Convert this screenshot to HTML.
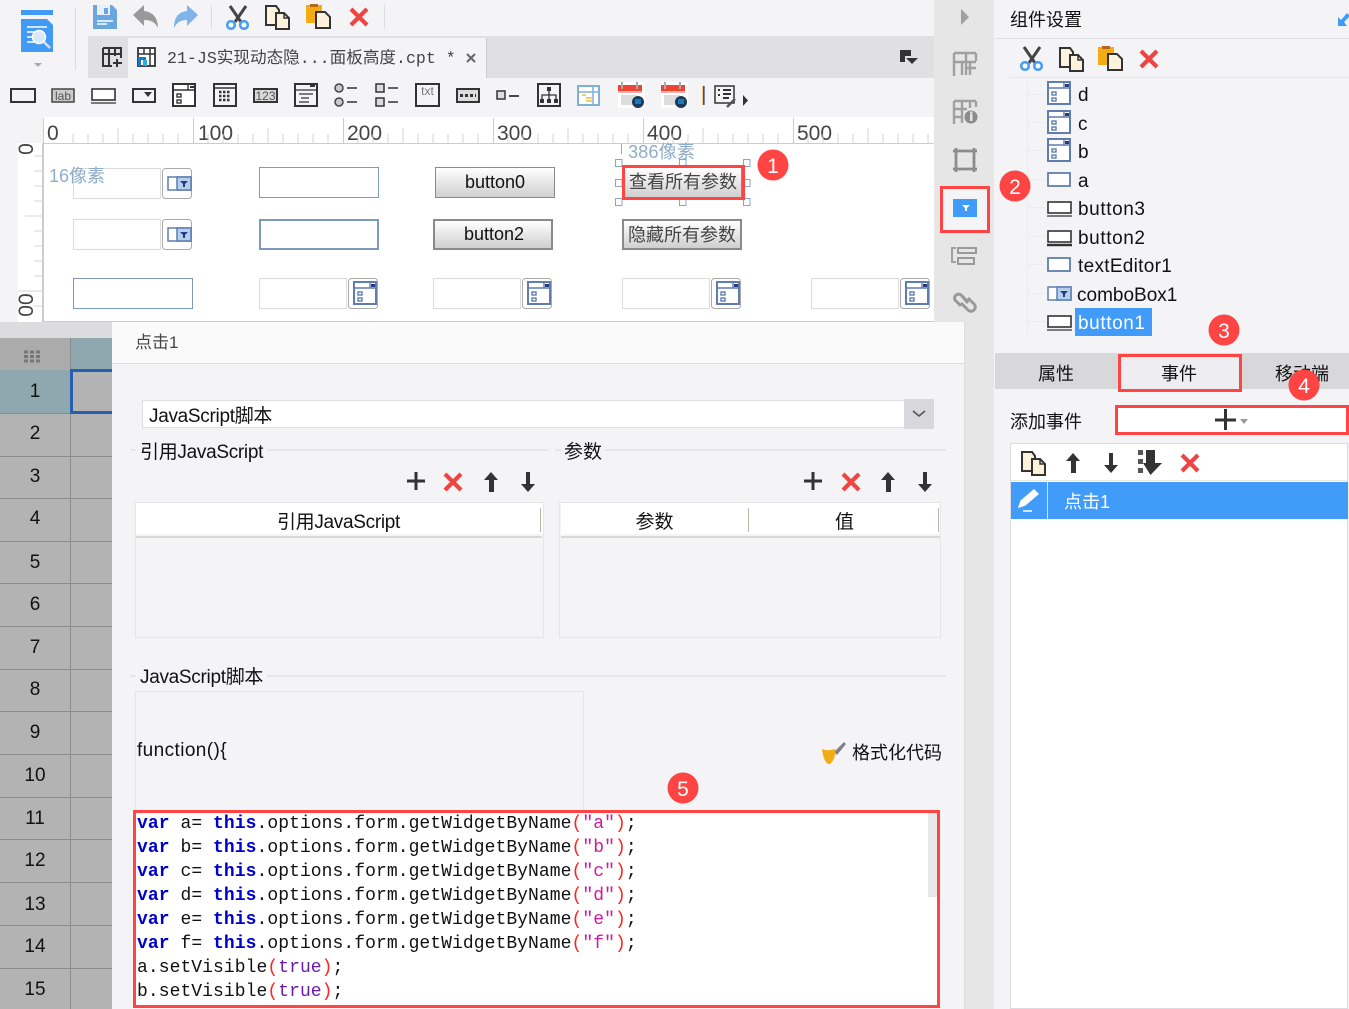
<!DOCTYPE html>
<html><head><meta charset="utf-8"><style>
html,body{margin:0;padding:0}
body{width:1349px;height:1009px;overflow:hidden;position:relative;background:#f4f4f6;font-family:"Liberation Sans","Noto Sans CJK SC",sans-serif;color:#111}
.b{position:absolute;box-sizing:border-box}
.t{position:absolute;white-space:nowrap;font-size:19px;line-height:24px;transform:translateY(-10px)}
.c{text-align:center}
.rn{position:absolute;left:0;width:70px;text-align:center;font-size:19px;line-height:24px;transform:translateY(-10px)}
.rl{position:absolute;left:0;width:112px;height:1px;background:#8c8c8c}
.in{position:absolute;box-sizing:border-box;border:1px solid #dcdcdc;background:#fff;width:88px;height:31px}
.tx{position:absolute;box-sizing:border-box;border:1px solid #7f99bd;background:#fff;width:120px;height:31px}
.bn{position:absolute;box-sizing:border-box;width:120px;height:31px;border:1px solid #8a8a8a;background:linear-gradient(#fff,#cfcfcf);text-align:center;font-size:18px;line-height:29px}
.code{position:absolute;left:137px;font-family:"Liberation Mono",monospace;font-size:18px;line-height:24px;white-space:pre;color:#111;letter-spacing:.06px;transform:translateY(2px)}
.code b{color:#00c;font-weight:700}.code i{font-style:normal;color:#f22}.code s{text-decoration:none;color:#d0199a}.code u{text-decoration:none;color:#6a1bb0}
.js{letter-spacing:-.3px}
</style></head><body>

<div class="b" style="left:88px;top:36px;width:846px;height:42px;background:#e0e0e2"></div>
<div class="b" style="left:128px;top:38px;width:359px;height:40px;background:#f4f4f6;border-right:1px solid #ccc"></div>
<div class="t" style="left:167px;top:57px;font-family:'Liberation Mono','Noto Sans CJK SC',monospace;font-size:16.6px;color:#444">21-JS实现动态隐...面板高度.cpt *</div>

<!-- ruler -->
<div class="b" style="left:43px;top:117px;width:891px;height:27px;background:#fff;border-bottom:1px solid #ccc"></div>
<div class="b" style="left:18px;top:143px;width:26px;height:179px;background:#fff;border-right:2px solid #ccc"></div>
<div class="b" style="left:44px;top:144px;width:890px;height:177px;background:#fff"></div>
<div class="b" style="left:44px;top:321px;width:890px;height:1px;background:#ccc"></div>
<div class="t" style="left:47px;top:132px;font-size:21px;color:#444">0</div>
<div class="t" style="left:198px;top:132px;font-size:21px;color:#444">100</div>
<div class="t" style="left:347px;top:132px;font-size:21px;color:#444">200</div>
<div class="t" style="left:497px;top:132px;font-size:21px;color:#444">300</div>
<div class="t" style="left:647px;top:132px;font-size:21px;color:#444">400</div>
<div class="t" style="left:797px;top:132px;font-size:21px;color:#444">500</div>
<div class="t" style="left:15px;top:149px;font-size:21px;color:#444;transform:translateY(-12px) rotate(-90deg);width:24px;text-align:center">0</div>
<div class="t" style="left:14px;top:305px;font-size:21px;color:#444;transform:translateY(-12px) rotate(-90deg);width:26px;text-align:center">00</div>

<!-- widgets -->
<div class="in" style="left:73px;top:168px"></div>
<div class="in" style="left:73px;top:219px"></div>
<div class="tx" style="left:259px;top:167px"></div>
<div class="tx" style="left:259px;top:219px;border-width:2px"></div>
<div class="tx" style="left:73px;top:278px"></div>
<div class="in" style="left:259px;top:278px"></div>
<div class="in" style="left:433px;top:278px"></div>
<div class="in" style="left:622px;top:278px"></div>
<div class="in" style="left:811px;top:278px"></div>
<div class="bn" style="left:435px;top:167px">button0</div>
<div class="bn" style="left:433px;top:219px;border:2px solid #8a8a8a;line-height:27px;padding-left:2px">button2</div>
<div class="bn" style="left:622px;top:167px;color:#444;padding-left:2px">查看所有参数</div>
<div class="bn" style="left:622px;top:219px;border:2px solid #8a8a8a;line-height:28px;color:#444">隐藏所有参数</div>
<div class="t" style="left:49px;top:174px;color:#8fadcb;font-size:18px">16像素</div>
<div class="t" style="left:628px;top:150px;color:#8fadcb;font-size:18.3px">386像素</div>
<div class="b" style="left:621px;top:144px;width:1px;height:10px;background:#8fadcb"></div>

<!-- sidebar -->
<div class="b" style="left:934px;top:0;width:60px;height:1009px;background:#e6e6e6"></div>
<div class="b" style="left:940px;top:186px;width:50px;height:47px;background:#f4f4f6;border:3px solid #f44"></div>
<div class="b" style="left:953px;top:199px;width:24px;height:18px;background:#419bf9"></div>

<!-- sheet -->
<div class="b" style="left:0;top:322px;width:112px;height:687px;background:#b3b3b3"></div>
<div class="b" style="left:0;top:322px;width:112px;height:16px;background:#dcdcde"></div>
<div class="b" style="left:0;top:338px;width:71px;height:32px;background:#ababab"></div>
<div class="b" style="left:71px;top:338px;width:41px;height:32px;background:#8fa8b0"></div>
<div class="b" style="left:0;top:370px;width:70px;height:43px;background:#8fa8b0"></div>
<div class="b" style="left:70px;top:338px;width:1px;height:671px;background:#8c8c8c"></div>
<div class="rl" style="top:413px"></div><div class="rl" style="top:456px"></div><div class="rl" style="top:498px"></div><div class="rl" style="top:541px"></div><div class="rl" style="top:583px"></div><div class="rl" style="top:626px"></div><div class="rl" style="top:669px"></div><div class="rl" style="top:711px"></div><div class="rl" style="top:754px"></div><div class="rl" style="top:797px"></div><div class="rl" style="top:839px"></div><div class="rl" style="top:882px"></div><div class="rl" style="top:925px"></div><div class="rl" style="top:968px"></div>
<div class="b" style="left:70px;top:369px;width:42px;height:45px;border:3px solid #2560b0;border-right:0"></div>
<div class="rn" style="top:390px">1</div><div class="rn" style="top:432px">2</div><div class="rn" style="top:475px">3</div><div class="rn" style="top:517px">4</div><div class="rn" style="top:561px">5</div><div class="rn" style="top:603px">6</div><div class="rn" style="top:646px">7</div><div class="rn" style="top:688px">8</div><div class="rn" style="top:731px">9</div><div class="rn" style="top:774px">10</div><div class="rn" style="top:817px">11</div><div class="rn" style="top:859px">12</div><div class="rn" style="top:903px">13</div><div class="rn" style="top:945px">14</div><div class="rn" style="top:988px">15</div>

<!-- dialog -->
<div class="b" style="left:112px;top:322px;width:853px;height:687px;background:#f4f4f6;border-right:1px solid #ddd"></div>
<div class="b" style="left:112px;top:322px;width:853px;height:42px;background:#fafafa;border-bottom:1px solid #ddd;border-right:1px solid #ddd"></div>
<div class="t" style="left:135px;top:341px;font-size:17px;color:#444">点击1</div>
<div class="b" style="left:142px;top:400px;width:765px;height:28px;background:#fff;border:1px solid #ddd"></div>
<div class="t js" style="left:149px;top:415px">JavaScript脚本</div>
<div class="b" style="left:904px;top:399px;width:30px;height:30px;background:#d8d8dc"></div>

<div class="b" style="left:130px;top:449px;width:418px;height:2px;background:#e6e6e6"></div>
<div class="t js" style="left:136px;top:451px;background:#f4f4f6;padding:0 4px">引用JavaScript</div>
<div class="b" style="left:555px;top:449px;width:391px;height:2px;background:#e6e6e6"></div>
<div class="t" style="left:561px;top:451px;background:#f4f4f6;padding:0 3px">参数</div>

<div class="b" style="left:135px;top:502px;width:409px;height:136px;border:1px solid #e6e6e6"></div>
<div class="b" style="left:136px;top:503px;width:407px;height:31px;background:#fff;border-bottom:1px solid #fff"></div>
<div class="b" style="left:136px;top:536px;width:406px;height:2px;background:#dad8d2"></div>
<div class="b" style="left:540px;top:508px;width:1px;height:24px;background:#bbb6a8"></div>
<div class="t c js" style="left:136px;width:405px;top:521px">引用JavaScript</div>

<div class="b" style="left:559px;top:502px;width:382px;height:136px;border:1px solid #e6e6e6"></div>
<div class="b" style="left:561px;top:503px;width:379px;height:31px;background:#fff"></div>
<div class="b" style="left:561px;top:536px;width:379px;height:2px;background:#dad8d2"></div>
<div class="b" style="left:748px;top:508px;width:1px;height:24px;background:#bbb6a8"></div>
<div class="b" style="left:938px;top:508px;width:1px;height:24px;background:#bbb6a8"></div>
<div class="t c" style="left:561px;width:187px;top:521px">参数</div>
<div class="t c" style="left:749px;width:191px;top:521px">值</div>

<div class="b" style="left:130px;top:675px;width:816px;height:2px;background:#e6e6e6"></div>
<div class="t js" style="left:136px;top:676px;background:#f4f4f6;padding:0 4px">JavaScript脚本</div>
<div class="b" style="left:135px;top:691px;width:449px;height:125px;border:1px solid #e6e6e6"></div>
<div class="t" style="left:137px;top:749px;letter-spacing:.4px">function(){</div>
<div class="t" style="left:852px;top:751px;font-size:18px">格式化代码</div>

<div class="b" style="left:133px;top:810px;width:807px;height:198px;background:#fff;border:3px solid #f44"></div>
<div class="b" style="left:928px;top:813px;width:9px;height:84px;background:#e8e8e8"></div>
<div class="code" style="top:810px"><b>var</b> a= <b>this</b>.options.form.getWidgetByName<i>(</i><s>"a"</s><i>)</i>;</div>
<div class="code" style="top:834px"><b>var</b> b= <b>this</b>.options.form.getWidgetByName<i>(</i><s>"b"</s><i>)</i>;</div>
<div class="code" style="top:858px"><b>var</b> c= <b>this</b>.options.form.getWidgetByName<i>(</i><s>"c"</s><i>)</i>;</div>
<div class="code" style="top:882px"><b>var</b> d= <b>this</b>.options.form.getWidgetByName<i>(</i><s>"d"</s><i>)</i>;</div>
<div class="code" style="top:906px"><b>var</b> e= <b>this</b>.options.form.getWidgetByName<i>(</i><s>"e"</s><i>)</i>;</div>
<div class="code" style="top:930px"><b>var</b> f= <b>this</b>.options.form.getWidgetByName<i>(</i><s>"f"</s><i>)</i>;</div>
<div class="code" style="top:954px">a.setVisible<i>(</i><u>true</u><i>)</i>;</div>
<div class="code" style="top:978px">b.setVisible<i>(</i><u>true</u><i>)</i>;</div>

<!-- right panel -->
<div class="b" style="left:995px;top:0;width:354px;height:1009px;background:#f4f4f6"></div>
<div class="t" style="left:1010px;top:18px;font-size:18px">组件设置</div>
<div class="b" style="left:995px;top:38px;width:354px;height:1px;background:#dedee0"></div>
<div class="b" style="left:1009px;top:77px;width:340px;height:1px;background:#e6e6e8"></div>
<div class="b" style="left:1027px;top:80px;width:1px;height:256px;background:#ececee"></div>
<div class="b" style="left:1027px;top:94px;width:18px;height:1px;background:#ececee"></div>
<div class="b" style="left:1027px;top:122px;width:18px;height:1px;background:#ececee"></div>
<div class="b" style="left:1027px;top:150px;width:18px;height:1px;background:#ececee"></div>
<div class="b" style="left:1027px;top:179px;width:18px;height:1px;background:#ececee"></div>
<div class="b" style="left:1027px;top:207px;width:18px;height:1px;background:#ececee"></div>
<div class="b" style="left:1027px;top:236px;width:18px;height:1px;background:#ececee"></div>
<div class="b" style="left:1027px;top:264px;width:18px;height:1px;background:#ececee"></div>
<div class="b" style="left:1027px;top:293px;width:18px;height:1px;background:#ececee"></div>
<div class="b" style="left:1027px;top:321px;width:18px;height:1px;background:#ececee"></div>
<div class="t" style="left:1078px;top:94px;letter-spacing:.4px">d</div>
<div class="t" style="left:1078px;top:123px;letter-spacing:.4px">c</div>
<div class="t" style="left:1078px;top:151px;letter-spacing:.4px">b</div>
<div class="t" style="left:1078px;top:180px;letter-spacing:.4px">a</div>
<div class="t" style="left:1078px;top:208px;letter-spacing:.6px">button3</div>
<div class="t" style="left:1078px;top:237px;letter-spacing:.6px">button2</div>
<div class="t" style="left:1078px;top:265px;letter-spacing:.3px">textEditor1</div>
<div class="t" style="left:1077px;top:294px">comboBox1</div>
<div class="b" style="left:1075px;top:308px;width:77px;height:28px;background:#419bf9"></div>
<div class="t" style="left:1078px;top:322px;color:#fff;letter-spacing:.6px">button1</div>

<div class="b" style="left:995px;top:353px;width:354px;height:36px;background:#d8d8da"></div>
<div class="b" style="left:1118px;top:354px;width:124px;height:38px;background:#eeeef2;border:3px solid #f44"></div>
<div class="t c" style="left:1016px;width:80px;top:372px;font-size:18px">属性</div>
<div class="t c" style="left:1139px;width:80px;top:372px;font-size:18px">事件</div>
<div class="t c" style="left:1262px;width:80px;top:372px;font-size:18px">移动端</div>
<div class="t" style="left:1010px;top:420px;font-size:18px">添加事件</div>
<div class="b" style="left:1115px;top:405px;width:234px;height:30px;background:#fff;border:3px solid #f44"></div>
<div class="b" style="left:1010px;top:443px;width:338px;height:566px;background:#fff;border:1px solid #dcdcde"></div>
<div class="b" style="left:1011px;top:480px;width:337px;height:1px;background:#e6e6e6"></div>
<div class="b" style="left:1011px;top:482px;width:337px;height:37px;background:#419bf9"></div>
<div class="b" style="left:1047px;top:482px;width:1px;height:37px;background:#cfe5fc"></div>
<div class="t" style="left:1064px;top:500px;color:#fff;font-size:18px">点击1</div>

<svg width="1349" height="1009" viewBox="0 0 1349 1009" style="position:absolute;left:0;top:0">
<defs>
<g id="cut"><path d="M9 16L20 0M15 16L4 0" stroke="#444" stroke-width="3" fill="none"/><circle cx="5" cy="19" r="3.8" fill="#fff" stroke="#4a9df5" stroke-width="2.6"/><circle cx="18" cy="19" r="3.8" fill="#fff" stroke="#4a9df5" stroke-width="2.6"/></g>
<g id="copy"><path d="M1 1h10l3 4v15H1z" fill="#fdf3dc" stroke="#333" stroke-width="2"/><path d="M11 8h8l5 5v11H11z" fill="#fdf3dc" stroke="#333" stroke-width="2"/><path d="M19 8v5h5" fill="none" stroke="#333" stroke-width="1.5"/></g>
<g id="paste"><rect x="0" y="1" width="16" height="18" fill="#f2ac14"/><rect x="4" y="0" width="8" height="3" fill="#b5651d"/><path d="M10 8h9l5 5v11H10z" fill="#fdf3dc" stroke="#333" stroke-width="2"/></g>
<g id="x"><path d="M2 2L18 18M18 2L2 18" stroke="#ee4444" stroke-width="4.2" fill="none"/></g>
<g id="plus"><path d="M0 9h18M9 0v18" stroke="#333" stroke-width="3" fill="none"/></g>
<g id="up"><path d="M7 0L14 8H10V20H5V8H0z" fill="#333"/></g>
<g id="dn"><path d="M5 0H9V12H14L7 20L0 12H5z" fill="#333"/></g>
<g id="date"><rect x="1" y="1" width="22" height="22" fill="#fff" stroke="#333" stroke-width="2"/><path d="M1 7h22M16 1v6" stroke="#333" stroke-width="1.4"/><rect x="18" y="3" width="4" height="2" fill="#333"/><rect x="5" y="11" width="4" height="3" fill="none" stroke="#333" stroke-width="1.4"/><rect x="5" y="17" width="4" height="3" fill="none" stroke="#333" stroke-width="1.4"/></g>
<g id="bdate"><rect x="1" y="1" width="22" height="22" fill="#fff" stroke="#5f7daf" stroke-width="2"/><path d="M1 7h22M17 1v6" stroke="#5f7daf" stroke-width="1.4"/><rect x="18" y="3" width="4" height="3" fill="#2a3a80"/><rect x="5" y="11" width="4" height="3" fill="none" stroke="#5f7daf" stroke-width="1.4"/><rect x="5" y="17" width="4" height="3" fill="none" stroke="#5f7daf" stroke-width="1.4"/></g>
<g id="wbtn"><rect x="0.5" y="0.5" width="29" height="30" rx="3" fill="#fff" stroke="#aaa"/></g>
<g id="cmb"><rect x="1" y="1" width="23" height="13" fill="#fff" stroke="#5f7daf" stroke-width="1.5"/><rect x="10" y="1" width="14" height="13" fill="#b5cfee" stroke="#5f7daf" stroke-width="1.5"/><path d="M13 5h8l-3 3v3h-2V8z" fill="#2a3a80"/></g>
<g id="btn"><rect x="1" y="1" width="23" height="11" fill="#fff" stroke="#333" stroke-width="1.6"/><path d="M0 15h25" stroke="#333" stroke-width="1.2"/></g>
<g id="h"><rect x="0.5" y="0.5" width="6.5" height="7" fill="#fff" stroke="#8aa6c4"/></g>
</defs>

<!-- logo -->
<rect x="21" y="10" width="32" height="5" fill="#419bf5"/>
<path d="M21 19H47L53 25V52H21z" fill="#419bf5"/>
<path d="M27 27h20M27 32h10M27 37h8M27 42h12" stroke="#fff" stroke-width="1.6"/>
<circle cx="39" cy="37" r="6.5" fill="#d9e9fb" stroke="#fff" stroke-width="1.4"/><path d="M44 42l6 6" stroke="#dde" stroke-width="2.5"/>
<path d="M34 63h8l-4 4z" fill="#aaa"/>
<path d="M75.500 8v62M211.500 5v24M384.500 5v24" stroke="#ddd"/>

<!-- save/undo/redo -->
<path d="M93 5H112L117 10V29H93z" fill="#6aa6e0"/><rect x="97" y="5" width="13" height="10" fill="#e8f0fa"/><rect x="104" y="8" width="4" height="6" fill="#6aa6e0"/><path d="M97 21h16M97 24h10" stroke="#fff" stroke-width="1.4"/>
<path d="M133 15L144 5V11C153 12 158 18 158 28C155 22 151 20 144 20V26z" fill="#999"/>
<path d="M198 15L187 5V11C178 12 174 18 174 28C177 22 181 20 187 20V26z" fill="#7fb3ea"/>
<use href="#cut" x="226" y="6"/><use href="#copy" x="265" y="5"/><use href="#paste" x="306" y="4"/><use href="#x" x="349" y="7"/>

<!-- tabs icons -->
<path d="M103 48h18v10M103 48v18h9M103 54h18M109 48v18M115 48v8" fill="none" stroke="#333" stroke-width="2"/><path d="M117 59v8M113 63h9" stroke="#333" stroke-width="2"/>
<rect x="138" y="48" width="17" height="18" fill="#fff" stroke="#333" stroke-width="1.8"/><path d="M138 54h17M150 48v18M144 48v6" stroke="#333" stroke-width="1.5"/><path d="M138 57h8v3h-5v6h-3z" fill="#1b78c8"/><rect x="143" y="60" width="4" height="6" fill="#25b0d8"/>
<path d="M467 54l8 8M475 54l-8 8" stroke="#666" stroke-width="2"/>
<rect x="900" y="50" width="11" height="12" fill="#333"/><rect x="905" y="56" width="6" height="6" fill="#e0e0e2"/><path d="M906 58h12l-6 6z" fill="#333"/>

<!-- widget bar -->
<rect x="11" y="89" width="24" height="13" fill="none" stroke="#333" stroke-width="2"/>
<rect x="52" y="89" width="22" height="13" fill="#ccc" stroke="#444" stroke-width="1.5"/><text x="63" y="100" font-size="12" text-anchor="middle" fill="#555" font-family="Liberation Sans">lab</text>
<use href="#btn" x="91" y="88"/>
<rect x="133" y="89" width="22" height="13" fill="none" stroke="#333" stroke-width="2"/><path d="M144 92h8l-4 5z" fill="#333"/>
<use href="#date" x="172" y="83"/>
<rect x="214" y="84" width="22" height="22" fill="none" stroke="#333" stroke-width="2"/><path d="M214 88h22" stroke="#333" stroke-width="1.5"/><path d="M219 92h12M219 96h12M219 100h12" stroke="#333" stroke-width="2.400" stroke-dasharray="2.500 1.500"/>
<rect x="254" y="89" width="23" height="13" fill="#d8d8d8" stroke="#333" stroke-width="2"/><text x="265.500" y="100" font-size="12" text-anchor="middle" fill="#555" font-family="Liberation Sans">123</text>
<rect x="295" y="84" width="22" height="22" fill="none" stroke="#333" stroke-width="2"/><path d="M295 90h22M299 94h14M301 98h8M299 102h10" stroke="#333" stroke-width="1.300"/><rect x="310" y="85" width="5" height="2" fill="#333"/>
<circle cx="339" cy="88" r="4" fill="#ccc" stroke="#444" stroke-width="1.500"/><circle cx="339" cy="102" r="4" fill="#ccc" stroke="#444" stroke-width="1.500"/><path d="M347 88h10M347 102h10" stroke="#333" stroke-width="1.500"/>
<rect x="376" y="84" width="8" height="8" fill="#ddd" stroke="#333" stroke-width="1.500"/><rect x="376" y="98" width="8" height="8" fill="#ddd" stroke="#333" stroke-width="1.500"/><path d="M388 88h10M388 102h10" stroke="#333" stroke-width="1.500"/>
<rect x="416" y="84" width="23" height="22" fill="none" stroke="#333" stroke-width="2"/><text x="427.500" y="95" font-size="12" text-anchor="middle" fill="#777" font-family="Liberation Sans">txt</text>
<rect x="457" y="89" width="22" height="13" fill="#ddd" stroke="#333" stroke-width="2"/><path d="M460 95.500h16" stroke="#333" stroke-width="3" stroke-dasharray="3 2"/>
<rect x="497" y="91" width="8" height="8" fill="#ddd" stroke="#333" stroke-width="1.500"/><path d="M509 96h10" stroke="#333" stroke-width="1.800"/>
<rect x="538" y="84" width="22" height="22" fill="none" stroke="#333" stroke-width="2"/><path d="M549 90v5M542 100v-5h14v5M549 95v5" stroke="#333" stroke-width="1.300" fill="none"/><rect x="547" y="87" width="4" height="4" fill="#333"/><rect x="540" y="99" width="4" height="4" fill="#333"/><rect x="547" y="99" width="4" height="4" fill="#333"/><rect x="554" y="99" width="4" height="4" fill="#333"/>
<rect x="578" y="86" width="21" height="19" fill="#fff" stroke="#7fb0d5" stroke-width="2"/><path d="M578 92h21M593 86v19" stroke="#7fb0d5" stroke-width="1.500"/><path d="M582 95h4M586 98h6M586 101h6" stroke="#f2ac14" stroke-width="1.200"/>
<g id="calc"><rect x="618" y="82" width="27" height="26" fill="#fff"/><rect x="618" y="85" width="24" height="6" fill="#ee4433"/><rect x="618" y="91" width="24" height="2" fill="#f5b0a8"/><rect x="621" y="82" width="2" height="7" fill="#aaa"/><rect x="636" y="82" width="2" height="7" fill="#aaa"/><rect x="621" y="95" width="16" height="10" fill="#ddd"/><circle cx="638" cy="102" r="6" fill="#1d3b58"/><path d="M635 99h6v5h-6z" fill="#1a7ac0"/></g>
<use href="#calc" x="43" y="0"/>
<rect x="702.500" y="86" width="0.800" height="19" fill="#e89a20"/><rect x="703.300" y="86" width="1.200" height="19" fill="#1a1a40"/>
<rect x="715" y="86" width="19" height="17" fill="none" stroke="#333" stroke-width="1.500"/><path d="M718 90h2M718 95h2M723 90h8M723 94h8M723 98h6" stroke="#333" stroke-width="2"/><path d="M727 107l8-8" stroke="#555" stroke-width="2.500"/>
<path d="M743 95l5 5.500-5 5.500z" fill="#333"/>

<!-- ruler ticks -->
<path d="M43.500 118v25M193.500 118v25M343.500 118v25M493.500 118v25M643.500 118v25M793.500 118v25" stroke="#ccc"/>
<path d="M73 134v9M88 134v9M103 134v9M118 128v15M133 134v9M148 134v9M163 134v9M178 134v9M208 134v9M223 134v9M238 134v9M253 134v9M268 128v15M283 134v9M298 134v9M313 134v9M328 134v9M358 134v9M373 134v9M388 134v9M403 128v15M418 134v9M433 134v9M448 134v9M463 134v9M478 134v9M508 134v9M523 134v9M538 134v9M553 134v9M568 128v15M583 134v9M598 134v9M613 134v9M628 134v9M658 134v9M673 134v9M688 134v9M703 128v15M718 134v9M733 134v9M748 134v9M763 134v9M778 134v9M808 134v9M823 134v9M838 134v9M853 134v9M868 128v15M883 134v9M898 134v9M913 134v9M928 134v9" stroke="#d5d5d5"/>
<path d="M34 156h9M34 171h9M34 186h9M34 201h9M25 216h18M34 231h9M34 246h9M34 261h9M34 276h9M18 291h25M34 306h9" stroke="#d5d5d5"/>

<!-- combos and date buttons -->
<use href="#wbtn" x="162" y="168"/><use href="#cmb" x="167" y="176"/>
<use href="#wbtn" x="162" y="219"/><use href="#cmb" x="167" y="227"/>
<use href="#wbtn" x="348" y="278"/><use href="#bdate" x="353" y="281"/>
<use href="#wbtn" x="522" y="278"/><use href="#bdate" x="527" y="281"/>
<use href="#wbtn" x="711" y="278"/><use href="#bdate" x="716" y="281"/>
<use href="#wbtn" x="900" y="278"/><use href="#bdate" x="905" y="281"/>

<!-- selection -->
<use href="#h" x="615" y="159"/><use href="#h" x="679" y="159"/><use href="#h" x="743" y="159"/><use href="#h" x="615" y="179"/><use href="#h" x="743" y="179"/><use href="#h" x="615" y="198"/><use href="#h" x="679" y="198"/><use href="#h" x="743" y="198"/>
<rect x="623.500" y="166.500" width="120" height="32" fill="none" stroke="#f44" stroke-width="3"/>

<!-- sidebar icons -->
<path d="M961 9l8 8-8 8z" fill="#a0a0a0"/>
<path d="M954 53h22M954 53v23M976 53v8M954 62h22M962 62v13M970 62v13M966 53v22M966 68h10" fill="none" stroke="#a0a0a0" stroke-width="2.400"/>
<path d="M954 101h22M954 101v23M976 101v6M954 109h13M954 117h8M962 101v22M970 101v7" fill="none" stroke="#a0a0a0" stroke-width="2.400"/><circle cx="971" cy="117" r="6.500" fill="#8c8c8c"/><rect x="970" y="114" width="2.500" height="7" fill="#e6e6e6"/><rect x="970" y="111.500" width="2.500" height="2" fill="#e6e6e6"/>
<path d="M956 148v24M974 148v24M953 151h24M953 169h24" fill="none" stroke="#8c8c8c" stroke-width="2.800"/>
<path d="M962 205h8l-3 3v3h-2v-3z" fill="#fff"/>
<path d="M956 248h-4v14h4" fill="none" stroke="#999" stroke-width="1.800"/><rect x="958" y="248" width="18" height="5" fill="none" stroke="#999" stroke-width="2"/><rect x="958" y="258" width="16" height="6" fill="none" stroke="#999" stroke-width="2"/>
<path d="M968 302l-7-7a4 4 0 0 0-6 5l6 6M962 296l6 7M961 303l7 7a4 4 0 0 0 6-6l-6-6" fill="none" stroke="#999" stroke-width="3"/>

<!-- right toolbar -->
<use href="#cut" x="1020" y="47"/><use href="#copy" x="1059" y="47"/><use href="#paste" x="1098" y="46"/><use href="#x" x="1139" y="49"/>
<path d="M1338 26v-9l3 3 6-7 2 2v2l-5 5 3 4z" fill="#419bf5"/>

<!-- tree icons -->
<use href="#bdate" x="1047" y="81"/><use href="#bdate" x="1047" y="110"/><use href="#bdate" x="1047" y="138"/>
<rect x="1048" y="173" width="22" height="13" fill="#fff" stroke="#5f7daf" stroke-width="1.800"/>
<use href="#btn" x="1047" y="201"/><use href="#btn" x="1047" y="230"/><path d="M1047 245h25" stroke="#333" stroke-width="2.500"/>
<rect x="1048" y="258" width="22" height="13" fill="#fff" stroke="#5f7daf" stroke-width="1.800"/>
<use href="#cmb" x="1047" y="286"/>
<use href="#btn" x="1047" y="315"/>

<!-- tabs plus -->
<path d="M1215 420h21M1225.500 409v21" stroke="#333" stroke-width="3"/><path d="M1240 419h8l-4 5z" fill="#999"/>

<!-- list toolbar -->
<use href="#copy" x="1021" y="451"/><use href="#up" x="1066" y="453"/><use href="#dn" x="1104" y="453"/>
<path d="M1138 450h5v5h-5zM1138 459h5v5h-5zM1138 468h5v5h-5z" fill="#555"/><path d="M1146 450H1155V463H1162L1150.500 475L1143 463H1146z" fill="#333"/>
<use href="#x" x="1180" y="453"/>
<path d="M1019 507l2-6 13-11 4 4-13 11zM1032 511h-9" fill="#fff" stroke="#fff" stroke-width="1.400"/>

<!-- js toolbars -->
<use href="#plus" x="407" y="472"/><use href="#x" x="443" y="472"/><use href="#up" x="484" y="472"/><use href="#dn" x="521" y="472"/>
<use href="#plus" x="804" y="472"/><use href="#x" x="841" y="472"/><use href="#up" x="881" y="472"/><use href="#dn" x="918" y="472"/>
<path d="M913 411l6 5 6-5" fill="none" stroke="#555" stroke-width="1.600"/>

<!-- grid dots -->
<path d="M24 352h16M24 356.500h16M24 361h16" stroke="#777" stroke-width="3" stroke-dasharray="4 2"/>

<!-- broom -->
<path d="M834 752l10-10 2 2-9 11z" fill="#808088"/><path d="M822 749c5 2 10 1 13 0 1 5-1 12-5 15-4 1-7-6-8-15z" fill="#f2ac14"/>

<!-- badges -->
<g font-family="Liberation Sans" font-size="21" fill="#fff" text-anchor="middle">
<circle cx="773" cy="165" r="15.500" fill="#f44"/><text x="773" y="173">1</text>
<circle cx="1015" cy="186" r="15.500" fill="#f44"/><text x="1015" y="194">2</text>
<circle cx="1224" cy="330" r="15.500" fill="#f44"/><text x="1224" y="338">3</text>
<circle cx="1304" cy="385" r="15.500" fill="#f44"/><text x="1304" y="393">4</text>
<circle cx="683" cy="788" r="15.500" fill="#f44"/><text x="683" y="796">5</text>
</g>
</svg>
</body></html>
